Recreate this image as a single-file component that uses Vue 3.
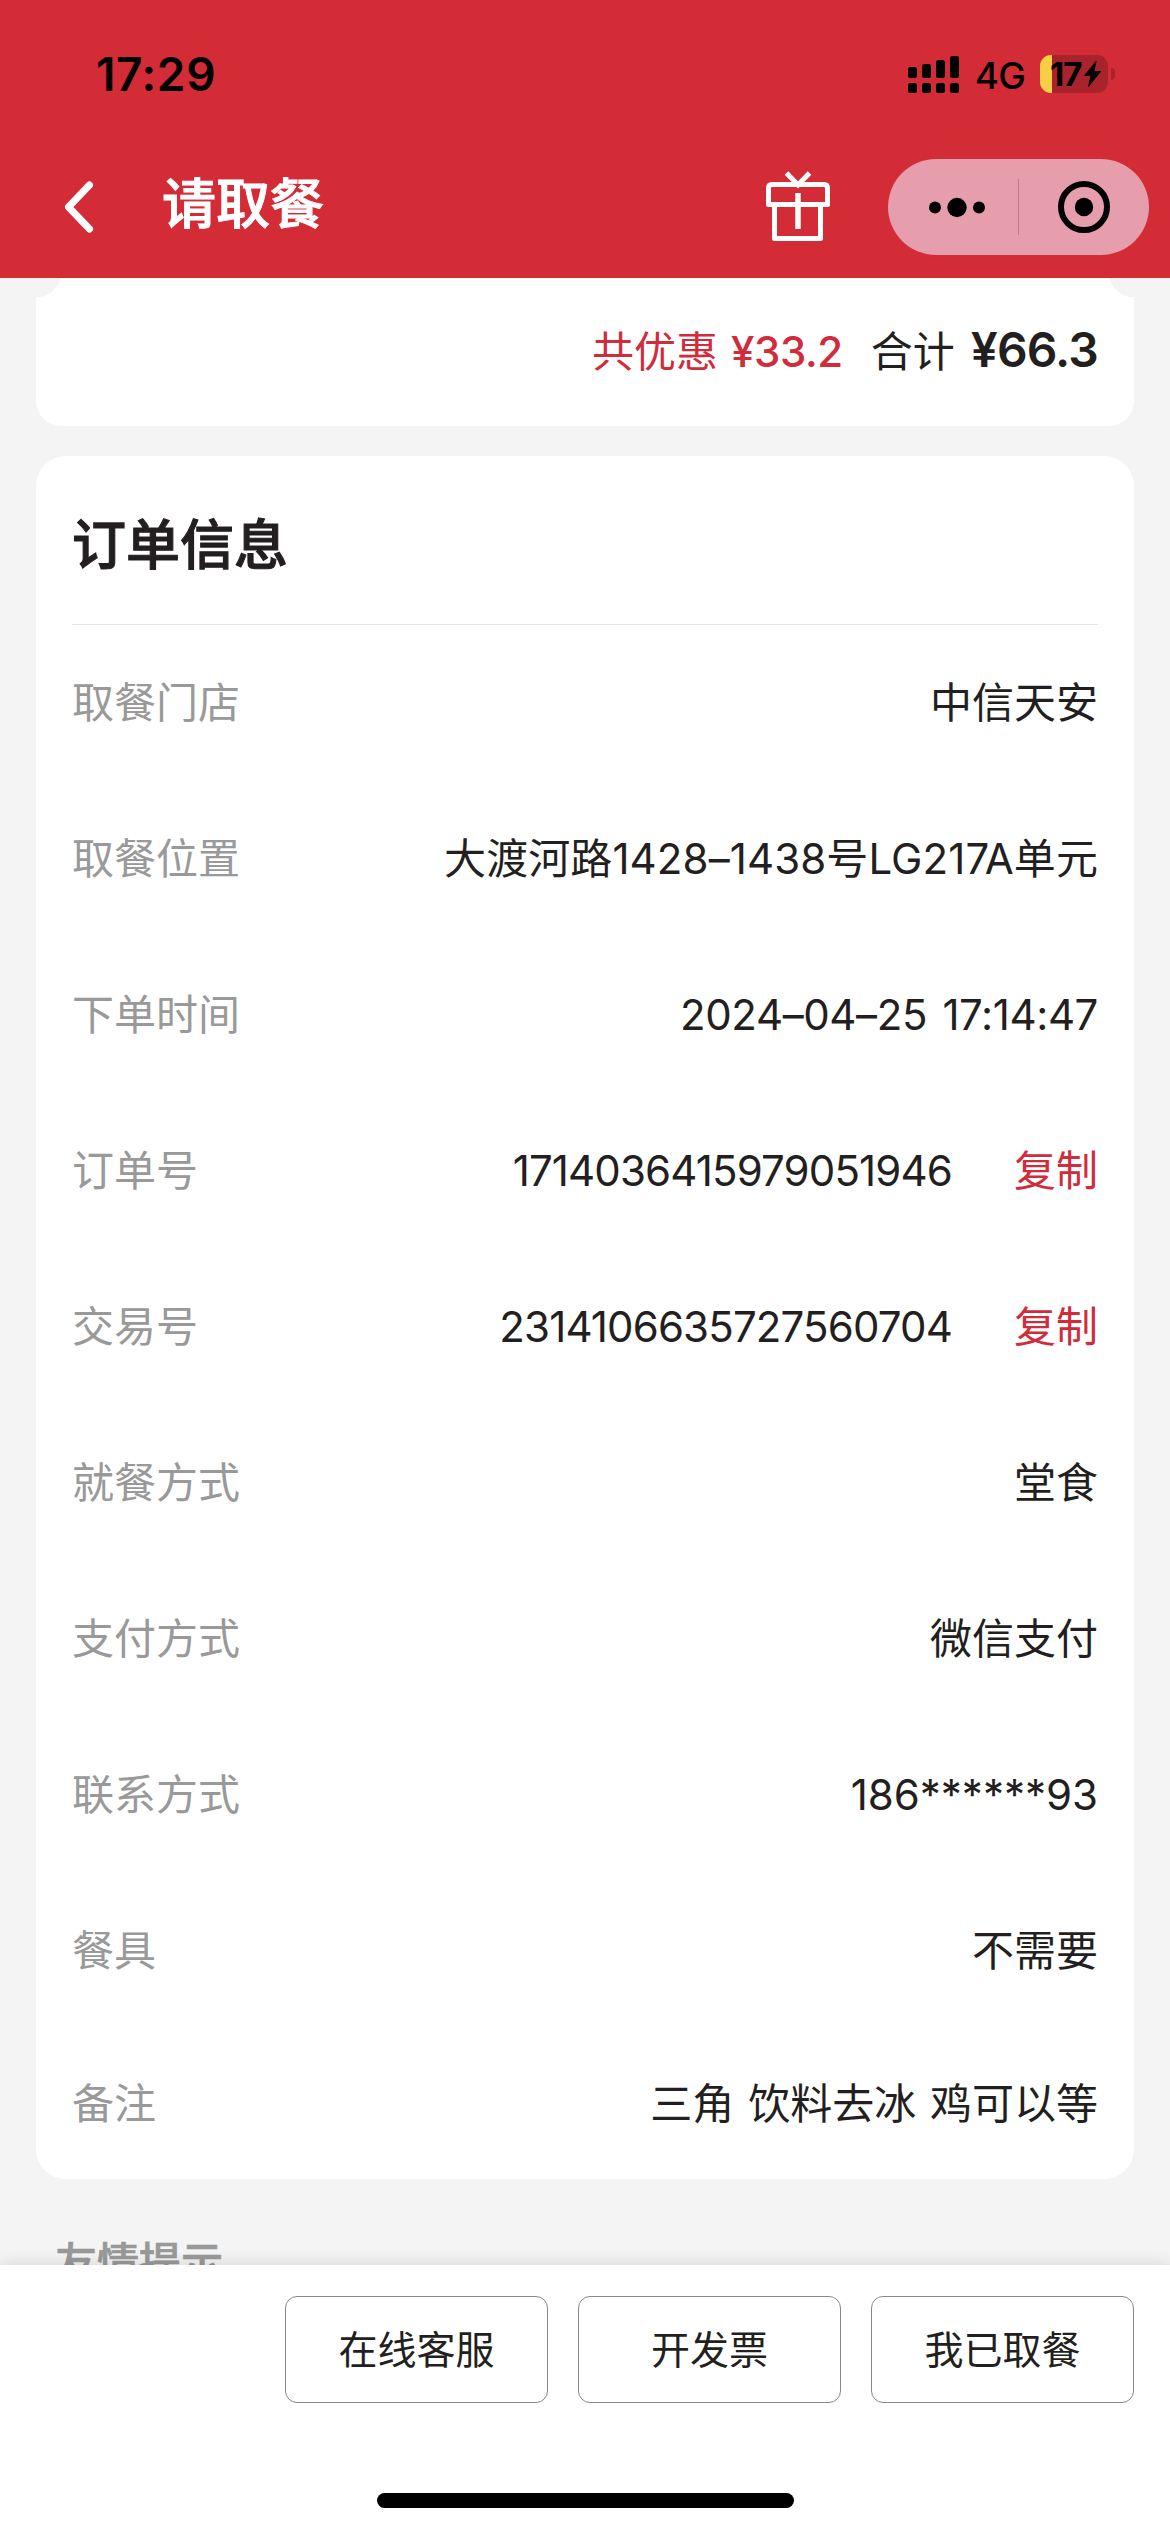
<script setup>
import { ref } from 'vue'

const titulo = ref('请取餐')

const resumo = {
  desconto: '¥33.2',
  total: '¥66.3'
}

const linhas = [
  { id: 1, nome: '取餐门店', valor: '中信天安' },
  { id: 2, nome: '取餐位置', valor: '大渡河路1428–1438号LG217A单元', classe: 'endereco' },
  { id: 3, nome: '下单时间', valor: '2024–04–25 17:14:47', classe: 'data' },
  { id: 4, nome: '订单号', valor: '1714036415979051946', classe: 'numero', copiar: true },
  { id: 5, nome: '交易号', valor: '2314106635727560704', classe: 'numero', copiar: true },
  { id: 6, nome: '就餐方式', valor: '堂食' },
  { id: 7, nome: '支付方式', valor: '微信支付' },
  { id: 8, nome: '联系方式', valor: '186******93' },
  { id: 9, nome: '餐具', valor: '不需要' },
  { id: 10, nome: '备注', valor: '三角 饮料去冰 鸡可以等' }
]

const botoes = ['在线客服', '开发票', '我已取餐']

function copiar(texto) {
  navigator.clipboard?.writeText(texto)
}
</script>

<template>
  <div class="pagina">
    <header class="topo">
      <div class="status">
        <span class="hora">17:29</span>
        <div class="status-direita">
          <svg class="sinal" width="52" height="38" viewBox="0 0 52 38">
            <rect x="0" y="12" width="9" height="11" rx="2.5" />
            <rect x="14" y="9" width="9" height="14" rx="2.5" />
            <rect x="28" y="5" width="9" height="18" rx="2.5" />
            <rect x="42" y="1" width="9" height="22" rx="2.5" />
            <rect x="0" y="28" width="9" height="10" rx="2.5" />
            <rect x="14" y="28" width="9" height="10" rx="2.5" />
            <rect x="28" y="28" width="9" height="10" rx="2.5" />
            <rect x="42" y="28" width="9" height="10" rx="2.5" />
          </svg>
          <span class="rede">4G</span>
          <div class="bateria">
            <span class="carga">17</span>
            <svg width="17" height="26" viewBox="0 0 17 26">
              <path d="M12 0.5 L0.5 14.5 H7 L4.5 25.5 L16.5 10.5 H9.8 Z" stroke="#000" stroke-width="1" stroke-linejoin="round" />
            </svg>
          </div>
          <div class="polo"></div>
        </div>
      </div>
      <div class="barra">
        <svg class="voltar" width="30" height="52" viewBox="0 0 30 52">
          <path d="M25.5 4 L4.5 26 L25.5 48" fill="none" stroke="#fff" stroke-width="7" stroke-linecap="round" stroke-linejoin="round" />
        </svg>
        <h1>{{ titulo }}</h1>
        <svg class="presente" width="66" height="71" viewBox="0 0 66 71" fill="none" stroke="#fff" stroke-width="5">
          <path d="M21.5 2 L33 14 L44.5 2" />
          <path d="M3.5 33.5 V17 Q3.5 13.5 7 13.5 H59 Q62.5 13.5 62.5 17 V33.5 Z" stroke-linejoin="round" />
          <path d="M9.5 34 V67.5 H55.5 V34" stroke-linejoin="round" />
          <path d="M33 22 V58" stroke-width="5.5" />
        </svg>
        <div class="capsula">
          <svg width="261" height="96" viewBox="0 0 261 96">
            <circle cx="47" cy="48.5" r="6" />
            <circle cx="69" cy="48.5" r="9.7" />
            <circle cx="91" cy="48.5" r="6" />
            <rect x="130" y="20" width="1" height="56" fill="#c4788a" />
            <circle cx="196" cy="48" r="23" fill="none" stroke="#000" stroke-width="6" />
            <circle cx="196" cy="48" r="9.2" />
          </svg>
        </div>
      </div>
    </header>

    <main class="conteudo">
      <section class="cartao resumo">
        <span class="desconto">共优惠</span>
        <span class="desconto preco">{{ resumo.desconto }}</span>
        <span class="total">合计</span>
        <span class="preco-total">{{ resumo.total }}</span>
      </section>

      <section class="cartao pedido">
        <h2>订单信息</h2>
        <div class="linha" v-for="linha in linhas" :key="linha.id">
          <label>{{ linha.nome }}</label>
          <span class="valor" :class="linha.classe">{{ linha.valor }}</span>
          <a v-if="linha.copiar" class="copiar" @click="copiar(linha.valor)">复制</a>
        </div>
      </section>

      <p class="dica">友情提示</p>
    </main>

    <footer class="rodape">
      <div class="botoes">
        <button v-for="botao in botoes" :key="botao">{{ botao }}</button>
      </div>
      <div class="indicador"></div>
    </footer>
  </div>
</template>

<style>
body {
  margin: 0;
  background-color: #f4f4f4;
}
</style>

<style scoped>
.pagina {
  display: flex;
  flex-direction: column;
  width: 1170px;
  height: 2532px;
  overflow: hidden;
  background-color: #f4f4f4;
  color: #231f20;
  font-family: Inter, "Noto Sans CJK SC", sans-serif;
  font-size: 42px;
}

.topo {
  flex: none;
  box-sizing: border-box;
  height: 278px;
  padding-top: 44px;
  background-color: #d32c37;
}

.status {
  display: flex;
  justify-content: space-between;
  align-items: center;
  height: 60px;
  padding: 0 55px 0 96px;
  color: #000;
}

.hora {
  font-size: 46px;
  font-weight: 600;
  line-height: 60px;
  letter-spacing: 0.6px;
}

.status-direita {
  display: flex;
  align-items: center;
}

.rede {
  margin-left: 15px;
  font-size: 37px;
  font-weight: 500;
  line-height: 60px;
  padding-top: 3px;
  letter-spacing: -0.8px;
}

.bateria {
  display: flex;
  align-items: center;
  box-sizing: border-box;
  width: 68px;
  height: 38px;
  margin-left: 15px;
  padding-left: 10px;
  border-radius: 11px;
  background: linear-gradient(to right, #f7ce46 12px, #a8232c 12px);
}

.carga {
  width: 34px;
  font-size: 33px;
  font-weight: 700;
  line-height: 38px;
  letter-spacing: -1px;
}

.polo {
  width: 4px;
  height: 12px;
  margin-left: 3px;
  border-radius: 0 6px 6px 0;
  background-color: #a8232c;
}

.barra {
  display: flex;
  align-items: center;
  height: 96px;
  margin-top: 55px;
  padding: 0 21px 0 64px;
}

h1 {
  flex: 1;
  margin: 0 0 5px 68px;
  color: #fff;
  font-size: 54px;
  font-weight: 500;
  line-height: 80px;
  -webkit-text-stroke: 1px #fff;
}

.presente {
  margin: 0 57px 2px 0;
}

.capsula {
  height: 96px;
  border-radius: 48px;
  background-color: #e69dac;
}

.conteudo {
  flex: 1;
  min-height: 0;
  overflow: hidden;
  padding: 0 36px;
}

.cartao {
  background-color: #fff;
  box-sizing: border-box;
}

.resumo {
  display: flex;
  justify-content: flex-end;
  align-items: baseline;
  height: 148px;
  padding: 42px 36px 0 0;
  border-radius: 0 0 25px 25px;
  /* recorte do cupom nos cantos superiores */
  background: radial-gradient(circle at 0 -6px, #f4f4f4 25px, transparent 25.5px),
    radial-gradient(circle at 100% -6px, #f4f4f4 25px, transparent 25.5px),
    #fff;
  line-height: 60px;
}

.desconto {
  color: #d02c3c;
}

.preco {
  margin: 0 28px 0 13px;
  font-weight: 500;
  letter-spacing: -0.4px;
}

.preco-total {
  margin-left: 16px;
  font-size: 48px;
  font-weight: 600;
  letter-spacing: -0.9px;
}

.pedido {
  height: 1723px;
  margin-top: 30px;
  padding: 0 36px;
  border-radius: 30px;
}

h2 {
  box-sizing: border-box;
  height: 169px;
  margin: 0;
  padding-top: 50px;
  border-bottom: 1px solid #e5e5e5;
  font-size: 54px;
  font-weight: 500;
  line-height: 80px;
  -webkit-text-stroke: 1.1px #231f20;
}

.linha {
  display: flex;
  align-items: center;
  height: 156px;
  line-height: 60px;
}

.linha:last-child {
  height: 150px;
}

label {
  flex: 1;
  color: #999;
}

.valor {
  word-spacing: 2px;
}

.endereco {
  letter-spacing: 0.1px;
}

.data {
  letter-spacing: -0.4px;
  word-spacing: 4px;
}

.numero {
  letter-spacing: -0.85px;
}

.copiar {
  margin-left: 62px;
  color: #d02c3c;
}

.dica {
  margin: 54px 0 0 19px;
  color: #999;
  font-weight: 500;
  line-height: 60px;
  -webkit-text-stroke: 0.7px #999;
}

.rodape {
  position: relative;
  flex: none;
  box-sizing: border-box;
  height: 267px;
  padding: 31px 36px 0;
  background-color: #fff;
  box-shadow: 0 0 16px rgba(0, 0, 0, 0.14);
}

.botoes {
  display: flex;
  justify-content: flex-end;
  gap: 30px;
}

button {
  width: 263px;
  height: 107px;
  padding: 0 0 6px;
  border: 1px solid #888;
  border-radius: 12px;
  background-color: #fff;
  color: #231f20;
  font-family: inherit;
  font-size: 39px;
}

.indicador {
  width: 417px;
  height: 15px;
  margin: 90px auto 0;
  border-radius: 8px;
  background-color: #000;
}
</style>
